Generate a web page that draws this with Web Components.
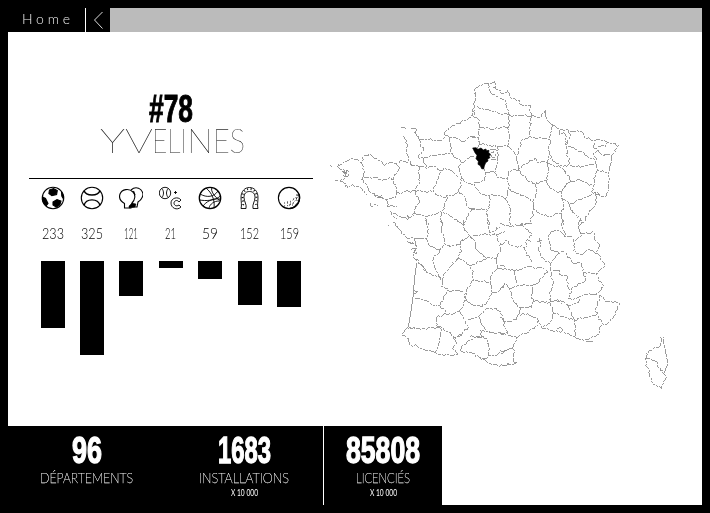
<!DOCTYPE html>
<html lang="fr">
<head>
<meta charset="utf-8">
<title>Yvelines</title>
<style>
html,body{margin:0;width:710px;height:513px;overflow:hidden;background:#000}
</style>
</head>
<body>
<sport-dashboard></sport-dashboard>
<script>
const define = (name, render) => customElements.define(name, class extends HTMLElement {
  connectedCallback() {
    if (this.shadowRoot) return;
    this.attachShadow({mode: 'open'}).innerHTML = render(this);
  }
});

/* One line of text stretched to an exact width.
   "parts" holds x:width:letters groups for lettering of uneven proportions. */
define('fit-text', el => {
  const a = n => el.getAttribute(n);
  const w = +a('w'), size = +a('size'), h = +(a('h') || Math.ceil(size));
  const bold = el.hasAttribute('bold');
  const font = bold
    ? `font:700 ${size}px "Liberation Sans Narrow","Liberation Sans",sans-serif;stroke:currentColor;stroke-width:${a('stroke') || .8}`
    : `font:${a('weight') || 100} ${size}px Lato,sans-serif;stroke:currentColor;stroke-width:${a('stroke') || 0}`;
  const fit = el.hasAttribute('space') ? 'spacing' : 'spacingAndGlyphs';
  const body = a('parts')
    ? a('parts').split(' ').map(p => { const [x, pw, t] = p.split(':'); return `<tspan x="${x}" textLength="${pw}" lengthAdjust="${fit}">${t}</tspan>`; }).join('')
    : a('text');
  const place = a('parts') ? '' : `x="0" textLength="${w}" lengthAdjust="${fit}"`;
  return `<style>:host{display:block;width:${w}px;height:${h}px}svg{display:block;overflow:visible;will-change:transform}text{${font};fill:currentColor}</style>
  <svg width="${w}" height="${h}"><text ${place} y="${h}">${body}</text></svg>`;
});

define('top-bar', () => `<style>
:host{display:flex;height:24px;background:#bbb}
.home{width:77px;background:#000;color:#eee;box-sizing:border-box;padding:6px 0 0 14px}
.back{width:24px;border-left:1px solid #fff;background:#000}
svg{display:block}
</style>
<div class="home"><fit-text text="Home" w="48" size="14" h="10" weight="300" space></fit-text></div>
<div class="back"><svg width="24" height="24" fill="none" stroke="#ddd" stroke-width="1"><path d="M16.5 4 8.500 12l8 8.500"/></svg></div>`);

const ICONS = {
  soccer: `<circle cx="12" cy="12" r="10.700"/><path fill="#000" d="m8.500 4 4-1.500 3.800 2-.7 4-4.700 1.200-3-2.200ZM1.500 11l3 1.500 2.500 5-1.800 2.300C2.500 17.500 1 14 1.500 11ZM12 16l4-2.500 4 1.500-1.200 4-3.500 2-3.300-2ZM20.500 6l2 4v3l-1.700-3Z"/>`,
  tennis: `<circle cx="12" cy="12" r="10.700"/><path d="M4 4.500c2 6 14 6 16 0M4 19.500c2-7.500 14-7.500 16 0" stroke-width="1.400"/>`,
  boxing: `<path d="M5.500 22v-4.500C1 15 0 11 1 8c2-5 9-6 13-2 3 3 2 8-1 11l-1 5Z"/><path d="M12 4c5-4.500 11-1.500 12 4 0 4-2 6-5 8l-1 5h-5M14.500 5l1.500 4"/><path fill="#000" d="m10 20 3-3 4 1-1 3-6 1Z" stroke-width=".5"/>`,
  baseball: `<g stroke-width=".9"><circle cx="6" cy="7" r="5.700"/><path d="M3 2.500c2 3 2 6 0 9M9 2.500c-2 3-2 6 0 9M22 14c-3-4-10-2-10 3s6 8 10 4l-2-2c-3 2-5 0-5-2s3-4 5-1ZM15 6.500h3M16.500 5v3"/></g>`,
  basket: `<circle cx="12" cy="12" r="10.700" stroke-width="1.300"/><path stroke-width=".9" d="M2 8c7 4 14 3 18-3M8 2c6 5 9 12 8 20M14 1.500c-2 3 3 10 8 13M1.500 14c6 1 15 1 21-4M5 20c3-4 9-8 17-7M11 22c1-4 5-7 10-7"/>`,
  shoe: `<path stroke-width=".9" d="M3 22.500c1-3 0-7 0-11C3 5 7 1.500 11.500 1.500S20 5 20 11.500c0 4-1 8 0 11h-5c-1-4 2-7 2-11 0-4-2-6-5.500-6S6 7.500 6 11.500c0 4 3 7 2 11Z"/><path stroke-width="2" stroke-dasharray="1 2.500" d="M5 19c1-2-.5-5-.5-8 0-5 3-8 7-8s7 3 7 8c0 3-1 6 0 8"/>`,
  golf: `<circle cx="12" cy="12" r="10.600"/><path stroke-dasharray="1 2" d="M7 20c8 0 12-5 14-11M10 16c5 0 9-4 10-7M7 17h11M12 19h7M16 13h6M20 5v14" stroke-width=".8"/><path stroke-width="1.500" d="M22 8c2 7-2 13-9 14.500"/>`
};
define('sport-column', el => {
  const a = n => el.getAttribute(n);
  return `<style>
:host{display:flex;flex-direction:column;align-items:center;min-width:0;color:#000}
svg{display:block;height:24px}
fit-text{margin:17px 0 22px}
.bar{width:24px;height:${a('bar')}px;background:#000}
</style>
<svg width="24" height="24" viewBox="0 0 24 24" fill="none" stroke="#000" stroke-width="1.100">${ICONS[a('icon')]}</svg>
<fit-text text="${a('count')}" w="${a('w')}" size="15.500" h="12" weight="300"></fit-text>
<div class="bar"></div>`;
});

define('department-card', () => {
  const rows = [['soccer',233,22,67.4],['tennis',325,22,93.7],['boxing',121,14,35.3],['baseball',21,11,6.5],['basket',59,16,17.6],['shoe',152,19,44],['golf',159,19,46.3]];
  return `<style>
:host{display:flex;flex-direction:column;width:284px;padding:62px 0 0 21px}
.num{align-self:center}
.name{margin:7px 0 25px 71px}
.sports{display:grid;grid-template-columns:repeat(7,39.4px);padding:7px 0 0 4px;border-top:1px solid #000}
</style>
<fit-text class="num" text="#78" w="44" size="39" h="28" stroke="1" bold></fit-text>
<fit-text class="name" parts="0:53:YV 52:35:ELI 87:26:N 113:32:ES" w="144" size="33" h="24" weight="100" stroke=".1"></fit-text>
<div class="sports">${rows.map(r => `<sport-column icon="${r[0]}" count="${r[1]}" w="${r[2]}" bar="${r[3]}"></sport-column>`).join('')}</div>`;
});

/* Borders, drawn in tiles at three units per pixel: [x, y, polylines]. */
const TILES = [
[325,75,`357,180 372,160 400,145 430,132 448,120 450,105|228,157 242,160|258,160 270,160 272,172 266,172 280,190 310,195 350,197 358,185|232,182 245,195 248,240 255,265 262,272|250,262 225,258 222,265|280,190 285,208 296,218 290,232 280,245 295,252|118,243 140,241 155,250 178,272 195,262 215,265 222,275 218,292 208,300 205,320 213,335 213,350|37,275 60,258 85,253 110,262 118,243|110,262 117,285 115,305 107,312 125,330 130,345 150,362 185,373 210,370 213,350|37,275 50,283 70,285 52,291 73,290 55,294 72,300 60,310 45,318 60,325 68,340 80,330 100,335 120,350 125,358|50,288 65,296 55,302 68,306|150,362 170,362 160,368 178,371|15,271 20,274|30,316 38,318|115,305 145,308 175,315 190,310 205,312|135,385 140,395 150,388 160,390|185,373 187,395 215,395|195,408 205,425 215,430|205,415 225,425 248,435 246,420 255,430 270,415|213,355 240,350 268,347|255,265 280,275 283,300 280,330 268,347|268,347 300,350 325,350|280,275 300,278 330,275 345,287 335,315 325,350|295,252 303,275|295,252 315,242 345,240 375,235 400,250 410,262 402,280 408,300 408,330 400,350 380,362 355,367 340,362 325,350|345,287 360,280 380,288 400,305|410,262 440,245 450,245|372,185 375,210 378,235|357,180 372,185 400,190 415,200 430,187 450,185|408,310 425,325 450,328|400,350 420,365 425,390 440,405 430,420 420,440 418,450|368,367 358,390 355,412 385,430 415,448|268,347 278,365 285,385 270,395 270,415 300,425 350,412|350,412 345,430 352,450|300,428 310,450|440,405 450,400`],
[470,75,`15,95 15,40 40,27 52,25 75,20 80,32 70,38 90,45 100,58 112,47 125,70 145,77 155,90 180,90 185,122|52,25 60,48 80,65 105,75 110,100 118,120|20,92 45,105 80,112 118,122|15,95 8,120 25,130 30,155 25,185 28,208|30,155 70,163 115,155|118,122 115,155 118,190 115,215 140,240 142,260 145,285|118,122 150,120 185,125 180,155 180,185|185,122 210,128 225,105 230,135 250,150 270,165|250,150 240,175 240,195 180,185 155,195 150,215 140,240|240,195 235,220 240,240 232,265|28,208 60,210 85,215 115,215|28,208 22,220|85,215 82,250 80,270 75,290|45,290 75,293 80,307 110,312|60,225 82,228|62,232 72,230 76,245 68,250 60,242 70,238|62,252 82,254|0,185 25,187|270,165 295,165 300,185 290,210 292,245 300,265 290,275 265,265 250,260 240,240|270,165 270,180 282,172 290,185 285,210|300,170 330,170 350,190 370,197 382,193 405,198 445,210 425,245 418,285 415,320 418,345 410,362 395,365 378,350|295,215 320,225 345,240 375,255|300,270 315,275 340,275 375,265 380,250 370,235 385,228 370,215 375,200|385,215 405,215 410,200|385,228 395,240 420,240|375,265 385,285 410,292|385,285 375,305 370,335 365,350 395,365|145,285 160,270 195,250 200,260 232,265 235,290 230,318 195,325 175,320 145,285|145,285 115,290 112,310 115,340 108,370|232,265 250,270 275,280 300,305 300,320 280,340 265,352 240,340 230,318|300,320 330,315 370,335|280,340 275,370 280,395 275,415|200,325 195,360 190,390 200,410 235,425 275,415|108,370 90,362 60,362 30,355 18,340 15,322 45,315 45,290 40,280|115,340 140,355 165,365 190,382|108,370 120,400 120,430 122,450|60,362 60,390 50,410 55,450|0,400 50,405|190,390 190,420 175,445 150,450|275,370 300,388 340,370 378,350|300,388 300,405 330,430 335,445|378,350 380,380 355,420 335,445|275,415 280,450`],
[380,220,`25,16 28,18|40,8 60,30 80,52 105,57|105,57 110,85 100,105 108,125|82,65 102,72 88,68|92,90 105,85 110,100 95,95|102,115 115,125 130,145 140,158|105,57 140,55 145,75 165,85 180,90 195,75|135,0 145,25 140,55|180,90 170,105 158,110 160,130 170,155 187,178|185,0 185,30 195,60 200,78 240,75 245,95 230,118 210,140 190,165 187,178 150,160 140,155 120,130|103,210 115,215 103,220|105,235 130,237 160,255 180,258 190,235 200,212 250,215 260,240|187,178 185,200 205,205|240,75 240,65 270,50 300,45 335,42 350,45 360,75 360,95 350,115 320,115 300,100 285,80 283,60 270,50|250,0 250,20 268,48|325,0 330,40 360,20|230,118 250,122 270,138 280,155 280,180 260,210 255,235|270,138 300,125 320,115|350,115 355,145 335,165 330,190 280,180|330,190 335,220 320,250 300,258 280,255 255,240|335,220 360,210 375,190|180,258 195,270 190,285 170,290 170,320 187,325 180,345 180,365 165,395|190,285 240,275 255,240|240,275 250,295 265,320 245,345 220,350 190,325|85,325 130,326 187,322|65,343 85,355 87,372 110,378 160,395 180,403 215,408 232,405|220,350 230,368 220,380 232,405|245,345 225,358|240,390 260,370 290,350 320,355 325,380 325,405 350,405 380,390|240,390 270,398 300,412 320,425 345,435 370,438 390,430|265,300 295,290 320,265 350,265 370,290 375,325 385,340 345,340 320,335 305,315 295,290|290,350 305,352 300,330 320,335|270,350 300,350|310,420 325,412|355,145 375,148|350,45 375,35`],
[500,220,`0,10 30,20 60,15 95,10|60,15 85,30 95,45 80,60 80,80|0,75 20,62 30,75 75,82 80,100 95,125|0,135 20,148 50,150 80,142 130,145 145,155|40,150 50,185 55,195 95,198 120,185 135,160 145,155|0,210 15,190 30,205 40,240 60,262 95,262 100,245 95,200|30,205 55,195|100,245 150,248 150,225 160,190 152,150|80,62 95,60|120,55 118,95 135,120 152,130 152,150|112,65 125,62|152,35 145,60 152,85 175,100 152,130|152,35 175,30 195,50 220,50|187,0 190,30 195,50|240,0 235,25 245,45 220,60 222,95 245,105 265,88|235,20 250,5|240,40 280,35 285,60 300,75 290,95 310,125 315,135 295,160 250,160 245,130 220,130 190,92 175,100|265,88 290,100|160,150 180,150 180,165 200,165 203,200 215,210|250,160 260,180 240,190 215,205 205,235 215,240 245,225 290,222 310,195 295,180 290,160|150,245 175,240 205,258 235,250 235,230|165,240 185,250|205,258 215,285 225,300|150,248 160,280 225,303 225,350|160,280 150,310 125,322 150,330 190,335 222,350 240,358 265,358 290,345 308,312|258,364 280,362|225,300 260,292 290,285 308,312 325,310 345,285 358,250 320,245 300,225|290,285 290,260 300,225|170,325 185,320 190,330|60,262 55,285 85,280 115,300 110,318 75,340 50,352 40,375 40,425 50,428 10,438|0,290 15,305 45,300 60,280|0,340 50,352|0,392 40,385|115,300 125,322`],
[630,325,`92,35 92,62 60,75 45,100 52,125 60,150 68,175 95,190 105,165 108,130 112,110 108,75 102,60 102,35|45,100 75,108 90,130 105,150`]];

let seed = 11;
const rnd = () => (seed = (seed * 16807) % 2147483647) / 2147483647 - .5;
/* Breaks each straight run into short, slightly displaced steps. */
const roughen = line => {
  const p = line.split(' ').map(s => s.split(',').map(Number));
  let d = 'M' + p[0];
  for (let i = 1; i < p.length; i++) {
    const [x0, y0] = p[i - 1], [x1, y1] = p[i];
    const n = Math.max(1, Math.round(Math.hypot(x1 - x0, y1 - y0) / 6));
    for (let k = 1; k < n; k++) d += `L${(x0 + (x1 - x0) * k / n + rnd() * 7).toFixed(1)},${(y0 + (y1 - y0) * k / n + rnd() * 7).toFixed(1)}`;
    d += `L${x1},${y1}`;
  }
  return d;
};
define('france-map', () => `<style>
:host{display:block;width:389px;height:394px}
svg{display:block}
</style>
<svg width="389" height="394" viewBox="313 32 389 394">
<g fill="none" stroke="#8c8c8c" stroke-width="2.600" shape-rendering="crispEdges">
<g stroke-dasharray="17 3 8 2.500">
${TILES.map(t => `<path transform="translate(${t[0]} ${t[1]}) scale(.33333)" d="${t[2].split('|').map(roughen).join('')}"/>`).join('')}
</g>
<path transform="translate(380 220) scale(.33333)" d="M110 130 103 180 100 225 95 260 85 320 65 343"/>
</g>
<path transform="translate(470 75) scale(.33333)" d="m8 219 10-1 6 5 9-4 7 6 7-3 4 5 6-1-1 7 6 5-5 5 3 5-7 4 1 6-7 5-4 10-2 9-6-1-4-9-7-4 1-9-7-8 3-10-6-8Z" stroke="#000" stroke-width="2"/>
</svg>`);

define('stat-block', el => {
  const a = n => el.getAttribute(n);
  return `<style>
:host{display:flex;flex-direction:column;align-items:center;padding-top:11px;box-sizing:border-box;height:79px;background:#000;color:#fff}
.l{margin-top:10px}.s{margin-top:5px}
</style>
<fit-text text="${a('value')}" w="${a('vw')}" size="36" h="26" stroke="1.300" bold></fit-text>
<fit-text class="l" text="${a('label')}" w="${a('lw')}" size="13" h="10" weight="100" stroke=".25"></fit-text>
${a('scale') ? `<fit-text class="s" text="${a('scale')}" w="27" size="9.500" h="8" weight="400"></fit-text>` : ''}`;
});

define('sport-dashboard', () => `<style>
:host{display:flex;flex-direction:column;box-sizing:border-box;width:710px;height:513px;padding:8px;background:#000}
main{display:flex;height:394px;background:#fff}
footer{display:flex;height:79px;background:#fff}
.a{width:157px}.b{width:158px}.c{width:119px;border-left:1px solid #fff}
</style>
<top-bar></top-bar>
<main><department-card></department-card><france-map></france-map></main>
<footer>
<stat-block class="a" value="96" vw="30" label="DÉPARTEMENTS" lw="93"></stat-block>
<stat-block class="b" value="1683" vw="53" label="INSTALLATIONS" lw="90" scale="X 10 000"></stat-block>
<stat-block class="c" value="85808" vw="74" label="LICENCIÉS" lw="54" scale="X 10 000"></stat-block>
</footer>`);
</script>
</body>
</html>
